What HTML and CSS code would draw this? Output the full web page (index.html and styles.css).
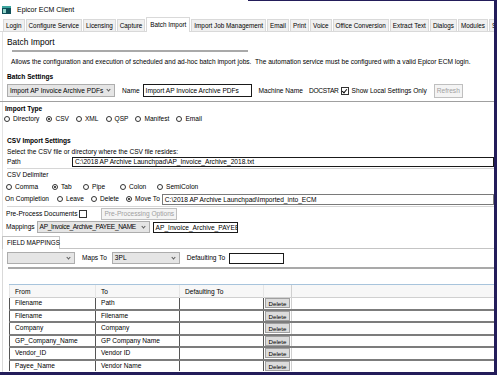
FILE: index.html
```html
<!doctype html>
<html lang="en">
<head>
	<meta charset="utf-8">
	<title>Epicor ECM Client</title>
	<link rel="stylesheet" href="styles.css">
</head>
<body>
<div class="window">
	<div class="titlebar">
		<svg class="app-icon" width="9" height="8" viewBox="0 0 9 8">
			<rect x="0" y="0" width="9" height="8" fill="#0f4f58"/>
			<rect x="0" y="0" width="9" height="2" fill="#3fa7a0"/>
			<rect x="1" y="3" width="3" height="4" fill="#8fd3c8"/>
		</svg>
		<span>Epicor ECM Client</span>
	</div>

	<ul class="tabs">
		<li>Login</li>
		<li>Configure Service</li>
		<li>Licensing</li>
		<li>Capture</li>
		<li class="active">Batch Import</li>
		<li>Import Job Management</li>
		<li>Email</li>
		<li>Print</li>
		<li>Voice</li>
		<li>Office Conversion</li>
		<li>Extract Text</li>
		<li>Dialogs</li>
		<li>Modules</li>
		<li>Settings</li>
	</ul>

	<div class="page">
		<div class="page-title">Batch Import</div>
		<div class="title-rule"></div>
		<p class="desc">Allows the configuration and execution of scheduled and ad-hoc batch import jobs.&nbsp; The automation service must be configured with a valid Epicor ECM login.</p>

		<div class="section">Batch Settings</div>
		<div class="row settings-row">
			<div class="combo combo-job">Import AP Invoice Archive PDFs</div>
			<label class="lbl name-lbl">Name</label>
			<div class="field field-dark name-field">Import AP Invoice Archive PDFs</div>
			<span class="lbl machine-lbl">Machine Name</span>
			<span class="lbl caps">DOCSTAR</span>
			<span class="check checked"></span>
			<span class="lbl">Show Local Settings Only</span>
			<span class="btn btn-off refresh">Refresh</span>
		</div>
		<div class="divider"></div>

		<div class="section section-out">Import Type</div>
		<div class="radios import-types">
			<span class="radio"></span><span class="opt">Directory</span>
			<span class="radio on"></span><span class="opt">CSV</span>
			<span class="radio"></span><span class="opt">XML</span>
			<span class="radio"></span><span class="opt">QSP</span>
			<span class="radio"></span><span class="opt">Manifest</span>
			<span class="radio"></span><span class="opt">Email</span>
		</div>

		<div class="section csv-title">CSV Import Settings</div>
		<div class="line">Select the CSV file or directory where the CSV file resides:</div>
		<div class="row path-row">
			<span class="lbl path-lbl">Path</span>
			<div class="field field-dark grow">C:\2018 AP Archive Launchpad\AP_Invoice_Archive_2018.txt</div>
		</div>
		<div class="group-rule"></div>
		<div class="line">CSV Delimiter</div>
		<div class="radios delimiters">
			<span class="radio"></span><span class="opt w-comma">Comma</span>
			<span class="radio on"></span><span class="opt w-tab">Tab</span>
			<span class="radio"></span><span class="opt w-pipe">Pipe</span>
			<span class="radio"></span><span class="opt w-colon">Colon</span>
			<span class="radio"></span><span class="opt">SemiColon</span>
		</div>
		<div class="row completion-row">
			<span class="lbl completion-lbl">On Completion</span>
			<span class="radio"></span><span class="opt">Leave</span>
			<span class="radio"></span><span class="opt">Delete</span>
			<span class="radio on"></span><span class="opt move-opt">Move To</span>
			<div class="field grow">C:\2018 AP Archive Launchpad\Imported_into_ECM</div>
		</div>
		<div class="group-rule"></div>
		<div class="row preprocess-row">
			<span class="lbl">Pre-Process Documents</span>
			<span class="check"></span>
			<span class="btn btn-off preprocess-btn">Pre-Processing Options</span>
		</div>
		<div class="row mappings-row">
			<span class="lbl mappings-lbl">Mappings</span>
			<div class="combo combo-map">AP_Invoice_Archive_PAYEE_NAME</div>
			<div class="field field-dark map-field">AP_Invoice_Archive_PAYEE_NAME</div>
		</div>

		<div class="subtabs">
			<span class="subtab">FIELD MAPPINGS</span>
		</div>
		<div class="fm-panel">
			<div class="row fm-row">
				<div class="combo combo-from"></div>
				<span class="lbl maps-lbl">Maps To</span>
				<div class="combo combo-to">3PL</div>
				<span class="lbl default-lbl">Defaulting To</span>
				<div class="field field-dark default-field"></div>
			</div>
			<div class="fm-rule"></div>
			<div class="grid-area">
				<table class="grid">
					<thead>
						<tr><th>From</th><th>To</th><th>Defaulting To</th><th class="del-col"></th><th class="rest"></th></tr>
					</thead>
					<tbody>
						<tr><td>Filename</td><td>Path</td><td></td><td class="del-col"><span class="del">Delete</span></td><td class="rest"></td></tr>
						<tr><td>Filename</td><td>Filename</td><td></td><td class="del-col"><span class="del">Delete</span></td><td class="rest"></td></tr>
						<tr><td>Company</td><td>Company</td><td></td><td class="del-col"><span class="del">Delete</span></td><td class="rest"></td></tr>
						<tr><td>GP_Company_Name</td><td>GP Company Name</td><td></td><td class="del-col"><span class="del">Delete</span></td><td class="rest"></td></tr>
						<tr><td>Vendor_ID</td><td>Vendor ID</td><td></td><td class="del-col"><span class="del">Delete</span></td><td class="rest"></td></tr>
						<tr><td>Payee_Name</td><td>Vendor Name</td><td></td><td class="del-col"><span class="del">Delete</span></td><td class="rest"></td></tr>
					</tbody>
				</table>
			</div>
		</div>
	</div>
</div>
</body>
</html>
```

FILE: styles.css
```css
html, body {
	margin: 0;
	padding: 0;
}

body {
	font-family: "Liberation Sans", Arial, sans-serif;
	font-size: 6.6px;
	color: #000;
	background: #fff;
}

.window {
	position: relative;
	width: 497px;
	height: 375px;
	box-sizing: border-box;
	padding-top: 1px;
	border-right: 3px solid #231d5a;
	border-bottom: 3px solid #231d5a;
	overflow: hidden;
}

/* the dark frame edge only shows along the right part of the top */
.window::before {
	content: "";
	position: absolute;
	top: 0;
	left: 248px;
	right: 0;
	height: 1px;
	background: #231d5a;
}

/* title bar */
.titlebar {
	height: 17px;
	display: flex;
	align-items: center;
	padding-left: 2px;
	font-size: 7px;
}

.app-icon {
	margin-right: 6px;
}

/* main tab strip */
.tabs {
	list-style: none;
	margin: 0;
	padding: 0 0 0 3px;
	height: 13px;
	display: flex;
	align-items: flex-end;
	gap: 1px;
	border-bottom: 1px solid #d9d9d9;
	white-space: nowrap;
	font-size: 6.35px;
}

.tabs li {
	height: 11px;
	line-height: 11px;
	padding: 0 2px;
	background: #f0f0f0;
	border: 1px solid #d9d9d9;
	border-bottom: none;
}

.tabs li.active {
	height: 14px;
	line-height: 13px;
	padding: 0 3px;
	background: #fff;
	margin-bottom: -1px;
}

/* page */
.page {
	padding: 0 0 0 4px;
	border-left: 1px solid #e3e3e3;
	margin-left: 2px;
	height: 343px;
}

.page-title {
	font-size: 8.4px;
	height: 12px;
	line-height: 12px;
	padding-top: 4px;
}

.title-rule {
	height: 2px;
	background: #a9a9a9;
	margin: 2px 0 0 5px;
	width: 236px;
}

.desc {
	margin: 5px 0 0 4px;
	height: 10px;
	line-height: 10px;
	white-space: nowrap;
}

.section {
	font-weight: bold;
	height: 10px;
	line-height: 10px;
	margin-top: 5px;
}

.section-out {
	margin-left: -2px;
	margin-top: 2px;
}

.csv-title {
	margin-top: 12px;
}

.line {
	height: 10px;
	line-height: 10px;
	margin-top: 1px;
	white-space: nowrap;
}

.row {
	display: flex;
	align-items: center;
	white-space: nowrap;
}

.lbl {
	line-height: 10px;
}

.caps {
	letter-spacing: -0.3px;
}

/* controls */
.combo {
	position: relative;
	box-sizing: border-box;
	height: 12px;
	line-height: 10px;
	padding: 0 10px 0 2px;
	background: #e5e5e5;
	border: 1px solid #adadad;
	overflow: hidden;
}

.combo::after {
	content: "";
	position: absolute;
	right: 4px;
	top: 3px;
	width: 2px;
	height: 2px;
	border-right: 1px solid #5a5a5a;
	border-bottom: 1px solid #5a5a5a;
	transform: rotate(45deg);
}

.field {
	box-sizing: border-box;
	height: 11px;
	line-height: 9px;
	padding: 0 2px;
	background: #fff;
	border: 1px solid #7a7a7a;
	overflow: hidden;
}

.field-dark {
	border-color: #1a1a1a;
}

.grow {
	flex: 1;
}

.check {
	box-sizing: border-box;
	width: 8px;
	height: 8px;
	border: 1px solid #333;
	background: #fff;
	position: relative;
}

.check.checked::after {
	content: "";
	position: absolute;
	left: 1.5px;
	top: 0;
	width: 2px;
	height: 4px;
	border-right: 1px solid #111;
	border-bottom: 1px solid #111;
	transform: rotate(40deg);
}

.btn {
	box-sizing: border-box;
	height: 12px;
	line-height: 10px;
	padding: 0 2px;
	border: 1px solid #bfbfbf;
	background: #f4f4f4;
}

.btn-off {
	color: #a0a0a0;
}

.radios {
	display: flex;
	align-items: center;
	height: 10px;
	white-space: nowrap;
}

.radio {
	box-sizing: border-box;
	width: 6px;
	height: 6px;
	border: 1px solid #333;
	border-radius: 50%;
	background: #fff;
	position: relative;
	flex: none;
}

.radio.on::after {
	content: "";
	position: absolute;
	left: 1px;
	top: 1px;
	width: 2px;
	height: 2px;
	border-radius: 50%;
	background: #111;
}

.opt {
	margin: 0 7px 0 3px;
	line-height: 10px;
}

/* batch settings row */
.settings-row {
	height: 13px;
	margin-top: 2px;
}

.combo-job {
	width: 108px;
	height: 13px;
	line-height: 11px;
}

.name-lbl {
	margin: 0 3px 0 7px;
}

.name-field {
	width: 109px;
	height: 13px;
	line-height: 11px;
}

.machine-lbl {
	margin: 0 6px 0 7px;
}

.settings-row .check {
	margin: 0 3px 0 2px;
}

.refresh {
	margin-left: 7px;
	height: 14px;
	line-height: 12px;
}

.divider {
	height: 1px;
	background: #a0a0a0;
	margin: 4px 0 0 -7px;
}

.import-types {
	margin-left: -3px;
}

/* csv settings */
.path-row {
	height: 10px;
}

.path-lbl {
	width: 65px;
}

.path-row .field {
	height: 10px;
	line-height: 8px;
}

.group-rule {
	height: 1px;
	background: #d6d6d6;
	margin: 1px 0 0 0;
}

.delimiters {
	height: 11px;
	margin-top: 1px;
}

.w-comma { width: 34px; margin-right: 3px; }
.w-tab { width: 20px; margin-right: 2px; }
.w-pipe { width: 25px; margin-right: 3px; }
.w-colon { width: 25px; margin-right: 3px; }

.delimiters .radio:first-child {
	margin-left: -1px;
}

.completion-row {
	height: 12px;
	margin-top: 1px;
	margin-left: -2px;
}

.completion-lbl {
	margin-right: 8px;
}

.completion-row .opt {
	margin-right: 7px;
}

.completion-row .move-opt {
	margin-right: 2px;
}

.completion-row .field {
	height: 11px;
}

.preprocess-row {
	height: 13px;
	margin-left: -1px;
}

.preprocess-row .check {
	margin-left: 2px;
}

.preprocess-btn {
	margin-left: 14px;
}

.mappings-row {
	height: 12px;
	margin-top: 1px;
	margin-left: -1px;
}

.mappings-lbl {
	margin-right: 2px;
}

.combo-map {
	width: 113px;
	padding-right: 9px;
	letter-spacing: -0.35px;
}

.map-field {
	width: 85px;
	margin-left: 3px;
	height: 11px;
}

/* field mappings tab page */
.subtabs {
	margin: 3px 0 0 -5px;
	height: 12px;
	display: flex;
	align-items: flex-end;
}

.subtab {
	box-sizing: border-box;
	width: 58px;
	height: 13px;
	margin-bottom: -1px;
	line-height: 11px;
	padding: 0 4px;
	border: 1px solid #c4c4c4;
	border-bottom: none;
	background: #fff;
	white-space: nowrap;
	font-size: 6.3px;
	position: relative;
}

.fm-panel {
	margin-left: -5px;
	border-top: 1px solid #c4c4c4;
	border-left: 1px solid #d9d9d9;
}

.fm-row {
	height: 12px;
	margin-top: 3px;
	padding-left: 4px;
}

.combo-from {
	width: 68px;
}

.maps-lbl {
	margin: 0 5px 0 7px;
}

.combo-to {
	width: 68px;
}

.default-lbl {
	margin: 0 4px 0 7px;
}

.default-field {
	width: 55px;
	height: 11px;
}

.fm-rule {
	height: 2px;
	background: #a9a9a9;
	margin: 3px 0 0 5px;
}

.grid-area {
	padding: 15px 0 0 6px;
	background: #fff;
}

.grid {
	border-collapse: collapse;
	width: 485px;
	table-layout: fixed;
}

.grid th {
	height: 12px;
	padding: 0 0 0 5px;
	font-weight: normal;
	text-align: left;
	background: #f7f7f7;
	border-top: 1px solid #a8c4dc;
	border-left: 1px solid #e6e6e6;
	line-height: 11px;
}

.grid th:nth-child(1),
.grid td:nth-child(1) { width: 80px; }
.grid th:nth-child(2),
.grid td:nth-child(2) { width: 78px; }
.grid th:nth-child(3),
.grid td:nth-child(3) { width: 78px; }

.grid th.del-col,
.grid td.del-col {
	width: 27px;
	padding: 0;
}

.grid td {
	height: 10.5px;
	padding: 0 0 0 5px;
	line-height: 10px;
	border-top: 2px solid #7c7c7c;
	border-left: 1px solid #555;
	white-space: nowrap;
	overflow: hidden;
}

.grid td.rest,
.grid th.rest {
	border-left: 1px solid #d0d0d0;
}

.grid tbody tr:first-child td {
	border-top: 1px solid #d0d0d0;
}

.del {
	display: block;
	box-sizing: border-box;
	height: 10px;
	line-height: 9px;
	margin: 0 1px;
	text-align: center;
	background: #dcdcdc;
	border: 1px solid #a0a0a0;
	font-size: 6.2px;
}
```
